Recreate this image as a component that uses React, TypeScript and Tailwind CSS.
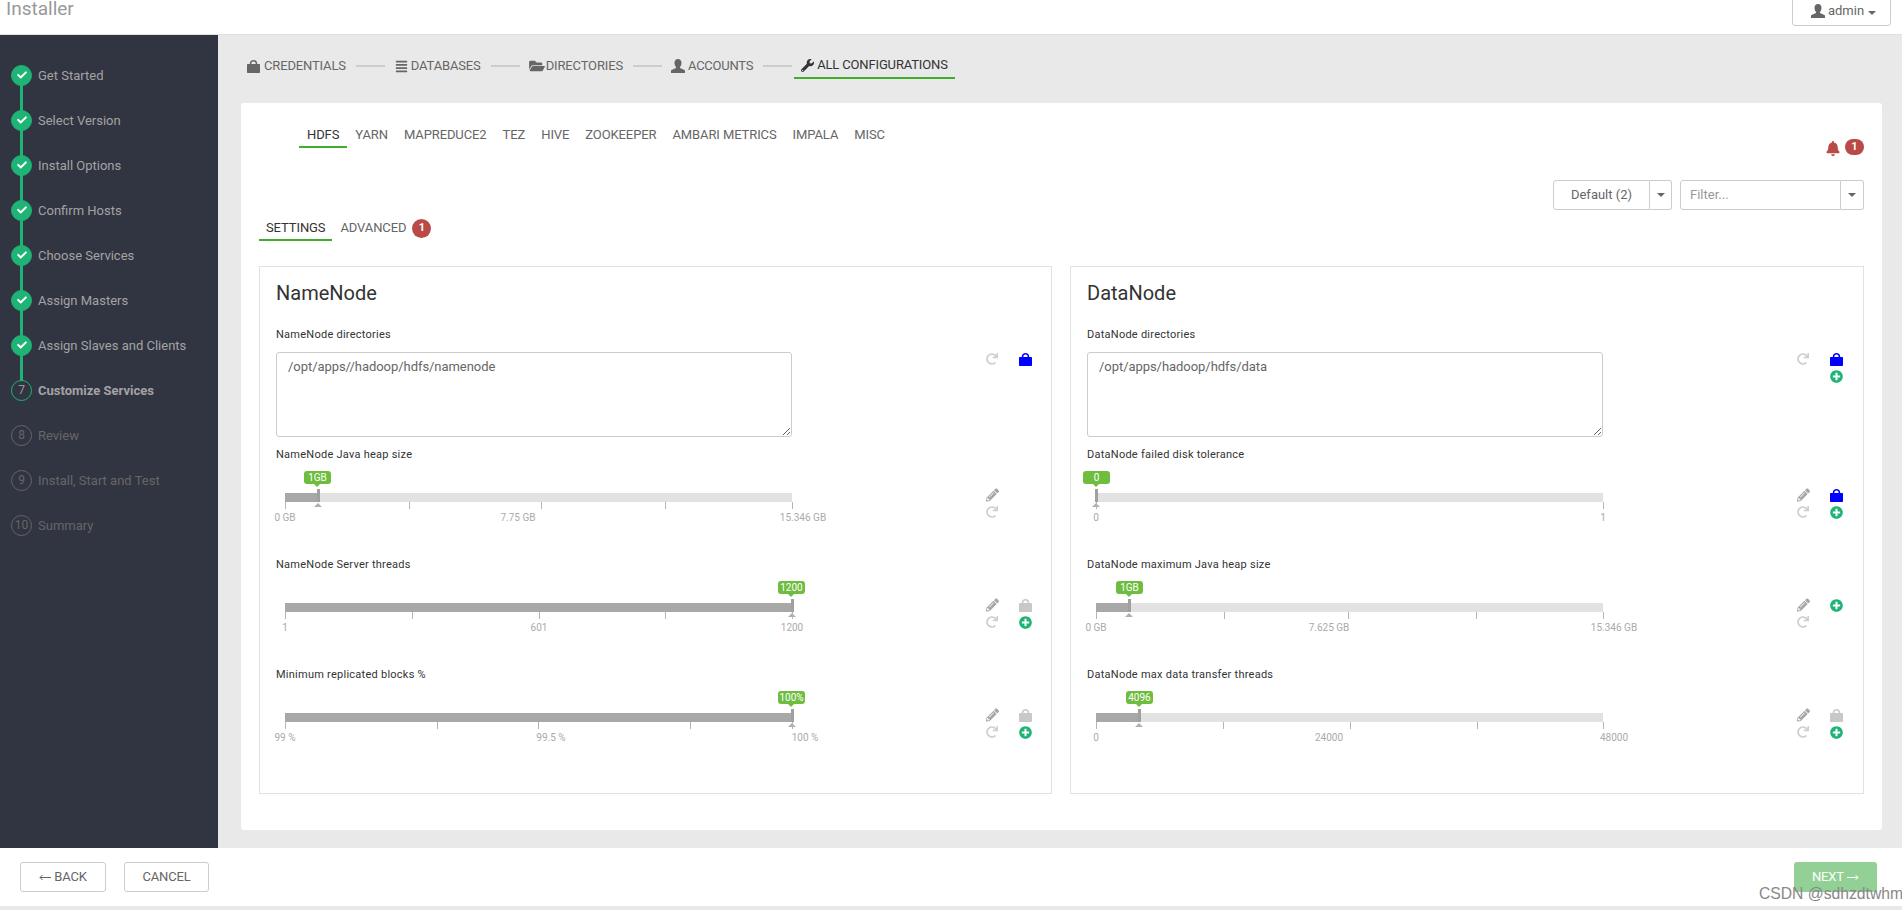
import React from "react";
import { FaBell, FaCheck, FaFolderOpen, FaPencilAlt, FaPlusCircle, FaRedo, FaWrench, FaAlignJustify } from "react-icons/fa";

const steps = ["Get Started","Select Version","Install Options","Confirm Hosts","Choose Services","Assign Masters","Assign Slaves and Clients","Customize Services","Review","Install, Start and Test","Summary"];

function Caret() {
  return <span className="inline-block w-0 h-0 border-l-[4px] border-r-[4px] border-t-[4px] border-l-transparent border-r-transparent border-t-[#666]" />;
}

function LockIcon({ className = "" }: { className?: string }) {
  return (
    <svg viewBox="0 0 13 13" className={"block " + className} fill="currentColor">
      <path d="M2.8 5V3.4C2.8 1.3 4.4 0 6.5 0S10.2 1.3 10.2 3.4V5H8.6V3.5C8.6 2.2 7.8 1.5 6.5 1.5S4.4 2.2 4.4 3.5V5Z" />
      <path d="M1 4H12C12.6 4 13 4.4 13 5V12C13 12.6 12.6 13 12 13H1C.4 13 0 12.6 0 12V5C0 4.4 .4 4 1 4Z" />
    </svg>
  );
}

function UserIcon({ className = "" }: { className?: string }) {
  return (
    <svg viewBox="0 0 14 14" className={"block " + className} fill="currentColor">
      <path d="M7 0C9.5 0 10.5 2 10.5 4C10.5 6 9.5 7.5 9 8V9L13.5 11C14 11.3 14 12 14 14H0C0 12 0 11.3 .5 11L5 9V8C4.5 7.5 3.5 6 3.5 4C3.5 2 4.5 0 7 0Z" />
    </svg>
  );
}

function Arrow({ left, className = "" }: { left?: boolean; className?: string }) {
  return (
    <svg viewBox="0 0 12 7" className={"block w-[12px] h-[7px] " + className} fill="none" stroke="currentColor" strokeWidth="1">
      {left ? <path d="M12 3.5H1M3.5 1L1 3.5L3.5 6" /> : <path d="M0 3.5H11M8.5 1L11 3.5L8.5 6" />}
    </svg>
  );
}

function Step({ index, label }: { index: number; label: string }) {
  const done = index < 7;
  const active = index === 7;
  return (
    <div className="relative flex items-center h-[45px] pl-[11px]">
      {index < 7 && <div className="absolute left-[20px] top-[32px] w-[3px] h-[26px] bg-[#1eb475]" />}
      <div className={"w-[21px] h-[21px] rounded-full flex items-center justify-center shrink-0 border text-[12px] pb-[2px] " + (done ? "bg-[#1eb475] border-[#1eb475] text-white" : active ? "border-[#1eb475] text-[#999]" : "border-[#666] text-[#666]")}>
        {done ? <FaCheck className="w-[10px] h-[10px]" /> : index}
      </div>
      <span className={"ml-[6px] text-[13px] " + (done ? "text-[#a3a3a3]" : active ? "text-[#a3a3a3] font-bold" : "text-[#666]")}>{label}</span>
    </div>
  );
}

function Sep({ ml = "ml-[10px]" }: { ml?: string }) {
  return <div className={"w-[29px] h-[2px] bg-[#cccccc] " + ml} />;
}

function TopNav() {
  const itemCls = "flex items-center h-[26px] text-[13px] tracking-[-0.15px] text-[#666]";
  return (
    <div className="flex items-center h-[26px] pl-[29px]">
      <div className={itemCls}><LockIcon className="w-[13px] h-[13px] mr-[4px]" />CREDENTIALS</div>
      <Sep />
      <div className={itemCls + " ml-[10px]"}><FaAlignJustify className="w-[13px] h-[13px] mr-[3px]" />DATABASES</div>
      <Sep />
      <div className={itemCls + " ml-[9px]"}><FaFolderOpen className="w-[16px] h-[14px] mr-[1px]" />DIRECTORIES</div>
      <Sep />
      <div className={itemCls + " ml-[9px] tracking-[-0.25px]"}><UserIcon className="w-[14px] h-[14px] mr-[3px]" />ACCOUNTS</div>
      <Sep />
      <div className="flex items-center h-[26px] ml-[2px] px-[7px] border-b-2 border-[#3fae2a] text-[13px] tracking-[-0.15px] text-[#333]"><FaWrench className="w-[13px] h-[13px] mr-[3px]" />ALL CONFIGURATIONS</div>
    </div>
  );
}

function Tab({ label, active, pad = "px-[8px]" }: { label: string; active?: boolean; pad?: string }) {
  return <div className={"h-[23px] pt-[1px] text-[13px] tracking-[-0.1px] leading-[18px] border-b-2 " + pad + " " + (active ? "border-[#3fae2a] text-[#333]" : "border-transparent text-[#666]")}>{label}</div>;
}

function Badge() {
  return <span className="w-[19px] h-[16px] rounded-full bg-[#b94a48] text-white text-[11px] font-bold flex items-center justify-center">1</span>;
}

type IconName = "refresh" | "pencil" | "lockBlue" | "lockGray" | "plus" | null;

function Ico({ name }: { name: IconName }) {
  if (!name) return <span />;
  if (name === "refresh") return <FaRedo className="w-[12px] h-[12px] text-[#cfcfcf]" />;
  if (name === "pencil") return <FaPencilAlt className="w-[14px] h-[14px] ml-[1px] text-[#a6a6a6]" />;
  if (name === "plus") return <FaPlusCircle className="w-[13px] h-[13px] text-[#1eb475]" />;
  return <LockIcon className={"w-[13px] h-[13px] " + (name === "lockBlue" ? "text-[#0000ff]" : "text-[#c8c8c8]")} />;
}

function Icons({ items, className = "" }: { items: IconName[]; className?: string }) {
  return (
    <div className={"grid grid-cols-[14px_14px] auto-rows-[17px] gap-x-[19px] ml-[193px] " + className}>
      {items.map((n, i) => <div key={i} className="flex items-center justify-center h-[14px]"><Ico name={n} /></div>)}
    </div>
  );
}

type SliderProps = { label: string; value: string; at: number; fill: number; ticks: number[]; labels: [string, number][]; icons: IconName[]; bubble?: number };

function Slider({ label, value, at, fill, ticks, labels, icons, bubble = 13 }: SliderProps) {
  return (
    <div className="h-[110px]">
      <div className="h-[16px] text-[11px] leading-[16px] text-[#333] tracking-[0.25px]">{label}</div>
      <div className="flex">
        <div className="w-[516px] pl-[9px] pt-[30px]">
          <div className="relative h-[9px] w-[507px] bg-[#e2e2e2]">
            <div className="h-full bg-[#a8a8a8]" style={{ width: fill }} />
            <div className="absolute top-[-4px] w-[3px] h-[13px] bg-[#a0a0a0]" style={{ left: at - 1 }} />
            <div className="absolute top-[10px] w-0 h-0 border-l-[4px] border-r-[4px] border-b-[4px] border-l-transparent border-r-transparent border-b-[#b0b0b0]" style={{ left: at - 4 }} />
            <div className="absolute top-[-22px] w-[27px] h-[13px] rounded-[3px] bg-[#6ebd3f] text-white text-[10px] leading-[13px] text-center" style={{ left: at - bubble }}>
              {value}
              <span className="absolute left-[10px] top-[13px] w-0 h-0 border-l-[3px] border-r-[3px] border-t-[3px] border-l-transparent border-r-transparent border-t-[#6ebd3f]" />
            </div>
            {ticks.map((t) => <div key={t} className="absolute top-[9px] w-px h-[7px] bg-[#b5b5b5]" style={{ left: t }} />)}
            {labels.map(([l, x]) => <span key={l} className="absolute top-[19px] -translate-x-1/2 text-[10px] leading-[12px] text-[#aaaaaa] whitespace-nowrap" style={{ left: x }}>{l}</span>)}
          </div>
        </div>
        <Icons items={icons} className="mt-[25px]" />
      </div>
    </div>
  );
}

function TextField({ label, value, icons }: { label: string; value: string; icons: IconName[] }) {
  return (
    <div>
      <div className="h-[16px] text-[11px] leading-[16px] text-[#333] tracking-[0.25px] mt-[21px]">{label}</div>
      <div className="flex mt-[9px]">
        <textarea readOnly value={value} className="w-[516px] h-[85px] border border-[#cccccc] rounded-[3px] px-[11px] py-[5px] text-[13px] tracking-[-0.05px] leading-[18px] text-[#666] outline-none" />
        <Icons items={icons} />
      </div>
    </div>
  );
}

function Panel({ title, children }: { title: string; children: React.ReactNode }) {
  return (
    <div className="h-[528px] border border-[#e2e2e2] pl-[16px] pt-[13px]">
      <div className="h-[26px] text-[20px] leading-[26px] text-[#333]">{title}</div>
      {children}
    </div>
  );
}

export default function App() {
  return (
    <div className="relative w-[1902px] h-[910px] overflow-hidden bg-[#e9e9e9] flex flex-col font-['Roboto',sans-serif]">
      <header className="h-[35px] shrink-0 bg-white border-b border-[#e0e0e0] flex justify-between">
        <div className="pl-[6px] text-[19px] leading-[17px] text-[#999]">Installer</div>
        <div className="mr-[11px] w-[99px] h-[27px] mt-[-1px] pb-[3px] pl-[4px] border border-[#cccccc] rounded-b-[3px] flex items-center justify-center gap-[3px] text-[13px] text-[#666]">
          <UserIcon className="w-[14px] h-[14px]" />admin<span className="ml-[1px]"><Caret /></span>
        </div>
      </header>
      <div className="flex flex-1 min-h-0">
        <aside className="w-[218px] shrink-0 bg-[#313542] pt-[18px]">
          {steps.map((s, i) => <Step key={s} index={i} label={s} />)}
        </aside>
        <main className="flex-1 min-w-0 pt-[18px]">
          <TopNav />
          <div className="relative ml-[23px] mr-[20px] mt-[24px] h-[727px] bg-white rounded-[3px] pt-[22px] px-[18px]">
            <div className="flex justify-between h-[32px]">
              <div className="flex pl-[40px]">
                {["HDFS","YARN","MAPREDUCE2","TEZ","HIVE","ZOOKEEPER","AMBARI METRICS","IMPALA","MISC"].map((t, i) => <Tab key={t} label={t} active={i === 0} />)}
              </div>
              <div className="flex items-start gap-[5px] pt-[14px]">
                <FaBell className="w-[14px] h-[15px] mt-[2px] text-[#b94a48]" /><Badge />
              </div>
            </div>
            <div className="flex justify-end mt-[23px] h-[30px] text-[13px]">
              <div className="w-[97px] border border-[#cccccc] rounded-l-[3px] flex items-center justify-center text-[#666]">Default (2)</div>
              <div className="w-[22px] border border-l-0 border-[#cccccc] rounded-r-[3px] flex items-center justify-center"><Caret /></div>
              <div className="w-[161px] ml-[8px] border border-[#cccccc] rounded-l-[3px] flex items-center pl-[9px] text-[#999]">Filter...</div>
              <div className="w-[23px] border border-l-0 border-[#cccccc] rounded-r-[3px] flex items-center justify-center"><Caret /></div>
            </div>
            <div className="flex items-start mt-[8px] h-[23px]">
              <Tab label="SETTINGS" active pad="px-[7px]" />
              <Tab label="ADVANCED" />
              <span className="w-[19px] h-[19px] mt-[1px] ml-[-2px] rounded-full bg-[#b94a48] text-white text-[11px] font-bold flex items-center justify-center">1</span>
            </div>
            <div className="grid grid-cols-[793px_794px] gap-x-[18px] mt-[25px]">
              <Panel title="NameNode">
                <TextField label="NameNode directories" value="/opt/apps//hadoop/hdfs/namenode" icons={["refresh","lockBlue"]} />
                <div className="mt-[10px]">
                  <Slider label="NameNode Java heap size" value="1GB" at={33} fill={33} bubble={14} ticks={[0,124,256,380,507]} labels={[["0 GB",0],["7.75 GB",233],["15.346 GB",518]]} icons={["pencil",null,"refresh",null]} />
                  <Slider label="NameNode Server threads" value="1200" at={507} fill={507} bubble={14} ticks={[0,127,254,380,507]} labels={[["1",0],["601",254],["1200",507]]} icons={["pencil","lockGray","refresh","plus"]} />
                  <Slider label="Minimum replicated blocks %" value="100%" at={507} fill={507} bubble={14} ticks={[0,152,253,405,507]} labels={[["99 %",0],["99.5 %",266],["100 %",520]]} icons={["pencil","lockGray","refresh","plus"]} />
                </div>
              </Panel>
              <Panel title="DataNode">
                <TextField label="DataNode directories" value="/opt/apps/hadoop/hdfs/data" icons={["refresh","lockBlue",null,"plus"]} />
                <div className="mt-[10px]">
                  <Slider label="DataNode failed disk tolerance" value="0" at={0} fill={0} ticks={[0,507]} labels={[["0",0],["1",507]]} icons={["pencil","lockBlue","refresh","plus"]} />
                  <Slider label="DataNode maximum Java heap size" value="1GB" at={33} fill={33} ticks={[0,128,252,380,507]} labels={[["0 GB",0],["7.625 GB",233],["15.346 GB",518]]} icons={["pencil","plus","refresh",null]} />
                  <Slider label="DataNode max data transfer threads" value="4096" at={43} fill={43} ticks={[0,127,254,381,507]} labels={[["0",0],["24000",233],["48000",518]]} icons={["pencil","lockGray","refresh","plus"]} />
                </div>
              </Panel>
            </div>
          </div>
        </main>
      </div>
      <footer className="h-[58px] mb-[4px] shrink-0 bg-white flex items-start justify-between pt-[14px] pl-[20px] pr-[25px]">
        <div className="flex gap-[18px]">
          <div className="w-[86px] h-[30px] border border-[#cccccc] rounded-[3px] flex items-center justify-center gap-[3px] text-[13px] tracking-[-0.15px] text-[#666]"><Arrow left />BACK</div>
          <div className="w-[85px] h-[30px] border border-[#cccccc] rounded-[3px] flex items-center justify-center text-[13px] tracking-[-0.15px] text-[#666]">CANCEL</div>
        </div>
        <div className="w-[83px] h-[30px] rounded-[3px] bg-[#92d095] flex items-center justify-center gap-[3px] text-[13px] tracking-[-0.15px] text-white">NEXT<Arrow /></div>
      </footer>
      <div className="absolute left-[1759px] top-[885px] text-[15.7px] leading-[18px] whitespace-nowrap text-[#888888] font-['Liberation_Sans',sans-serif]">CSDN @sdhzdtwhm</div>
    </div>
  );
}
